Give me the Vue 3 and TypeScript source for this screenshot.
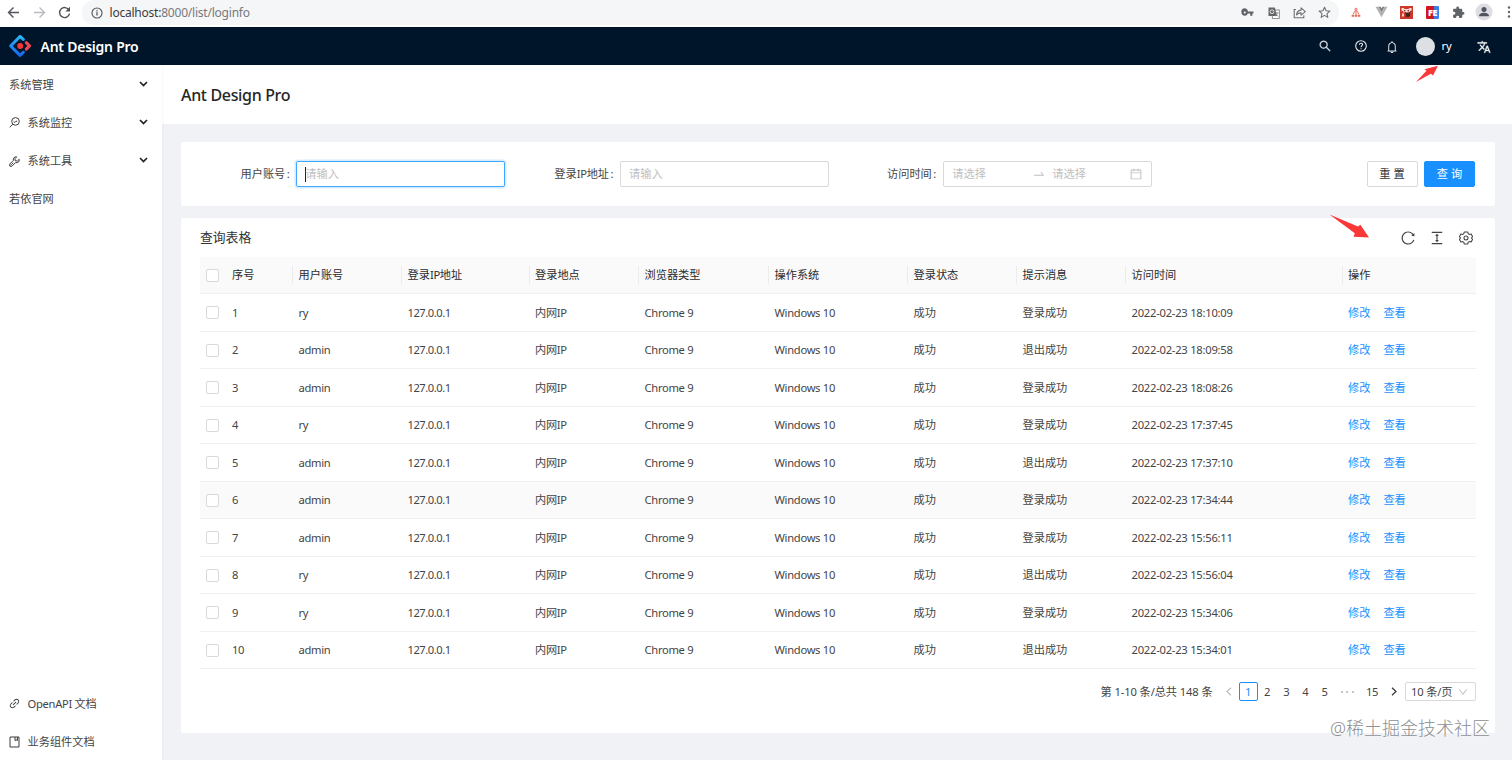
<script setup lang="ts">
interface Row { id: number; user: string; status: string; msg: string; time: string }

const rows: Row[] = [
  ['ry', '登录成功', '18:10:09'],
  ['admin', '退出成功', '18:09:58'],
  ['admin', '登录成功', '18:08:26'],
  ['ry', '登录成功', '17:37:45'],
  ['admin', '退出成功', '17:37:10'],
  ['admin', '登录成功', '17:34:44'],
  ['admin', '登录成功', '15:56:11'],
  ['ry', '退出成功', '15:56:04'],
  ['ry', '登录成功', '15:34:06'],
  ['admin', '退出成功', '15:34:01'],
].map(([user, msg, time], i) => ({ id: i + 1, user, status: '成功', msg, time: `2022-02-23 ${time}` }))

const columns: string[] = ['序号', '用户账号', '登录IP地址', '登录地点', '浏览器类型', '操作系统', '登录状态', '提示消息', '访问时间', '操作']
const pages: string[] = ['2', '3', '4', '5']

const icons = {
  search: 'M909.6 854.5L649.9 594.8C690.2 542.7 712 479 712 412c0-80.2-31.3-155.4-87.9-212.1-56.6-56.7-132-87.9-212.1-87.9s-155.5 31.3-212.1 87.9C143.2 256.5 112 331.8 112 412c0 80.1 31.3 155.5 87.9 212.1C256.5 680.8 331.8 712 412 712c67 0 130.6-21.8 182.7-62l259.7 259.6a8.2 8.2 0 0011.6 0l43.6-43.5a8.2 8.2 0 000-11.6zM570.4 570.4C528 612.7 471.8 636 412 636s-116-23.3-158.4-65.6C211.3 528 188 471.8 188 412s23.3-116.1 65.6-158.4C296 211.3 352.2 188 412 188s116.1 23.2 158.4 65.6S636 352.2 636 412s-23.3 116.1-65.6 158.4z',
  bell: 'M816 768h-24V428c0-141.1-104.3-257.8-240-277.1V112c0-22.1-17.9-40-40-40s-40 17.9-40 40v38.9c-135.7 19.3-240 136-240 277.1v340h-24c-17.7 0-32 14.3-32 32v32c0 4.4 3.6 8 8 8h216c0 61.8 50.2 112 112 112s112-50.2 112-112h216c4.4 0 8-3.6 8-8v-32c0-17.7-14.3-32-32-32zM512 888c-26.5 0-48-21.5-48-48h96c0 26.5-21.5 48-48 48zM304 768V428c0-55.6 21.6-107.8 60.9-147.1S456.4 220 512 220c55.6 0 107.8 21.6 147.1 60.9S720 372.4 720 428v340H304z',
  reload: 'M909.1 209.3l-56.4 44.1C775.8 155.1 656.2 92 521.9 92 290 92 102.3 279.5 102 511.5 101.7 743.7 289.8 932 521.9 932c181.3 0 335.8-115 394.6-276.1 1.5-4.2-.7-8.9-4.9-10.3l-56.7-19.5a8 8 0 00-10.1 4.8c-1.8 5-3.8 10-5.9 14.9-17.3 41-42.1 77.8-73.7 109.4A344.77 344.77 0 01655.9 829c-42.3 17.9-87.4 27-133.8 27-46.5 0-91.5-9.1-133.8-27A341.5 341.5 0 01279 755.2a342.16 342.16 0 01-73.7-109.4c-17.9-42.4-27-87.4-27-133.9s9.1-91.5 27-133.9c17.3-41 42.1-77.8 73.7-109.4 31.6-31.6 68.4-56.4 109.3-73.8 42.3-17.9 87.4-27 133.8-27 46.5 0 91.5 9.1 133.8 27a341.5 341.5 0 01109.3 73.8c9.9 9.9 19.2 20.4 27.8 31.4l-60.2 47a8 8 0 003 14.1l175.6 43c5 1.2 9.9-2.6 9.9-7.7l.8-180.9c-.1-6.6-7.8-10.3-13-6.2z',
  height: 'M840 836H184c-4.4 0-8 3.6-8 8v60c0 4.4 3.6 8 8 8h656c4.4 0 8-3.6 8-8v-60c0-4.4-3.6-8-8-8zm0-724H184c-4.4 0-8 3.6-8 8v60c0 4.4 3.6 8 8 8h656c4.4 0 8-3.6 8-8v-60c0-4.4-3.6-8-8-8zM610.8 378c6 0 9.4-7 5.7-11.7L515.7 238.7a7.14 7.14 0 00-11.3 0L403.6 366.3a7.23 7.23 0 005.7 11.7H476v268h-62.8c-6 0-9.4 7-5.7 11.7l100.8 127.5c2.9 3.7 8.5 3.7 11.3 0l100.8-127.5c3.7-4.7.4-11.7-5.7-11.7H548V378h62.8z',
  down: 'M884 256h-75c-5.1 0-9.9 2.5-12.9 6.6L512 654.2 227.9 262.6c-3-4.1-7.8-6.6-12.9-6.6h-75c-6.5 0-10.3 7.4-6.5 12.7l352.6 486.1c12.8 17.6 39 17.6 51.7 0l352.6-486.1c3.9-5.3.1-12.7-6.4-12.7z',
  calendar: 'M880 184H712v-64c0-4.4-3.6-8-8-8h-56c-4.4 0-8 3.6-8 8v64H384v-64c0-4.4-3.6-8-8-8h-56c-4.4 0-8 3.6-8 8v64H144c-17.7 0-32 14.3-32 32v664c0 17.7 14.3 32 32 32h736c17.7 0 32-14.3 32-32V216c0-17.7-14.3-32-32-32zm-40 656H184V460h656v380zM184 392V256h128v48c0 4.4 3.6 8 8 8h56c4.4 0 8-3.6 8-8v-48h256v48c0 4.4 3.6 8 8 8h56c4.4 0 8-3.6 8-8v-48h128v136H184z',
  swap: 'M873.1 596.2l-164-208A32 32 0 00684 376h-64.8c-6.7 0-10.4 7.7-6.3 13l144.3 183H152c-4.4 0-8 3.6-8 8v60c0 4.4 3.6 8 8 8h695.9c26.8 0 41.7-30.8 25.2-51.8z',
  link: 'M574 665.4a8.03 8.03 0 00-11.3 0L446.5 781.6c-53.8 53.8-144.6 59.5-204 0-59.5-59.5-53.8-150.2 0-204l116.2-116.2c3.1-3.1 3.1-8.2 0-11.3l-39.8-39.8a8.03 8.03 0 00-11.3 0L191.4 526.5c-84.6 84.6-84.6 221.5 0 306s221.5 84.6 306 0l116.2-116.2c3.1-3.1 3.1-8.2 0-11.3L574 665.4zm258.6-474c-84.6-84.6-221.5-84.6-306 0L410.3 307.6a8.03 8.03 0 000 11.3l39.7 39.7c3.1 3.1 8.2 3.1 11.3 0l116.2-116.2c53.8-53.8 144.6-59.5 204 0 59.5 59.5 53.8 150.2 0 204L665.3 562.6a8.03 8.03 0 000 11.3l39.8 39.8c3.1 3.1 8.2 3.1 11.3 0l116.2-116.2c84.5-84.6 84.5-221.5 0-306.1zM610.1 372.3a8.03 8.03 0 00-11.3 0L372.3 598.7a8.03 8.03 0 000 11.3l39.6 39.6c3.1 3.1 8.2 3.1 11.3 0l226.4-226.4c3.1-3.1 3.1-8.2 0-11.3l-39.5-39.6z',
  lang: 'M12.87 15.07l-2.54-2.51.03-.03A17.52 17.52 0 0014.07 6H17V4h-7V2H8v2H1v2h11.17C11.5 7.92 10.44 9.75 9 11.35 8.07 10.32 7.3 9.19 6.69 8h-2c.73 1.63 1.73 3.17 2.98 4.56l-5.09 5.02L4 19l5-5 3.11 3.11.76-2.04zM18.5 10h-2L12 22h2l1.12-3h4.75L21 22h2l-4.5-12zm-2.62 7l1.62-4.33L19.12 17h-3.24z',
  key: 'M12.65 10A6 6 0 101 12a6 6 0 0011.65 2H17v4h4v-4h2v-4H12.65zM7 14a2 2 0 110-4 2 2 0 010 4z',
  puzzle: 'M20.5 11H19V7c0-1.1-.9-2-2-2h-4V3.5a2.5 2.5 0 00-5 0V5H4c-1.1 0-2 .9-2 2v3.8h1.5a2.7 2.7 0 010 5.4H2V20c0 1.1.9 2 2 2h3.8v-1.5a2.7 2.7 0 015.4 0V22H17c1.1 0 2-.9 2-2v-4h1.5a2.5 2.5 0 000-5z',
}
</script>

<template>
  <div class="screen">
    <div class="browser">
      <div class="nav">
        <svg width="13" height="13" viewBox="0 0 13 13" class="line dark"><path d="M12 6.500H1.500M6.500 1.500l-5 5 5 5" /></svg>
        <svg width="13" height="13" viewBox="0 0 13 13" class="line pale"><path d="M1 6.500h10.500M6.500 1.500l5 5-5 5" /></svg>
        <svg width="13" height="13" viewBox="0 0 13 13" class="line dark"><path d="M11 4.200A5 5 0 1 0 11.500 7.600" /><path d="M12 .8v4.600H7.400z" fill="#505357" stroke="none" /></svg>
      </div>
      <div class="omnibox">
        <svg width="12" height="12" viewBox="0 0 12 12" class="line dark info"><circle cx="6" cy="6" r="5" stroke-width="1.100" /><path d="M6 5.300v3.200M6 3.200v1.200" stroke-width="1.300" /></svg>
        <span class="url">localhost:<span class="path">8000/list/loginfo</span></span>
        <div class="slots">
          <i><svg width="13" height="13" viewBox="0 0 24 24"><path :d="icons.key" fill="#5f6368" /></svg></i>
          <i><svg width="12" height="12" viewBox="0 0 12 12"><rect x="4.300" y="3" width="7" height="8.400" fill="#fff" stroke="#777" stroke-width=".8" /><path d="M.5.5h6.300l2.400 8.500H.5z" fill="#63666a" /><circle cx="4" cy="4.700" r="1.900" fill="none" stroke="#eee" stroke-width=".9" /><path d="M4 4.700h2M7.200 6h3.500M9 5v1c0 1.500-.8 2.500-2 3M7.800 7l2.500 2.600" stroke="#888" stroke-width=".8" fill="none" /></svg></i>
          <i><svg width="13" height="13" viewBox="0 0 13 13" class="line mid"><path d="M3 3.500H1.200v8.300h9.600V9.300" /><path d="M3.500 9c.2-3 1.800-4.700 4.600-4.900V1.800l4.200 3.800-4.200 3.600V6.900C6 6.900 4.600 7.600 3.500 9z" stroke-linejoin="round" /></svg></i>
          <i><svg width="13" height="13" viewBox="0 0 13 13" class="line mid"><path d="M6.500 1.200l1.600 3.500 3.800.4L9 7.600l.8 3.800-3.300-2-3.300 2L4 7.600 1.100 5.100l3.800-.4z" stroke-linejoin="round" /></svg></i>
        </div>
      </div>
      <div class="slots ext">
        <i><svg width="10" height="11" viewBox="0 0 11 11" fill="none" stroke="#ea6a55" stroke-width="1.100"><circle cx="5.500" cy="2" r="1.200" /><path d="M5.500 3.200v5M2.500 7.500l1.300-3.200 1.700-1 1.700 1 1.300 3.200" /><path d="M1 8.300h2.300v1.700H1zM4.400 8.300h2.200v1.700H4.400zM7.700 8.300H10v1.700H7.700z" fill="#ea6a55" stroke-width=".5" /></svg></i>
        <i><svg width="13" height="12" viewBox="0 0 13 12"><path d="M.5.700h3L6.500 6l3-5.300h3l-6 10.500z" fill="#b2b2b2" /><path d="M3.500.700h2.100l.9 1.700.9-1.700h2.100L6.500 6z" fill="#7c7c7c" /></svg></i>
        <i><svg width="13" height="13" viewBox="0 0 13 13"><rect width="13" height="13" fill="#cf3829" /><path d="M1.500 2h2l1 1h4l1-1h2v2.500l-2 1v1h-6v-1l-2-1z" fill="#f5ddd5" /><circle cx="4.700" cy="4.700" r=".8" fill="#912" /><circle cx="8.300" cy="4.700" r=".8" fill="#912" /><path d="M2 7.500h2v3H2z" fill="#f1cfc4" /><circle cx="8" cy="8.700" r="2.300" fill="#41251d" /><path d="M5 6l1.500 2M10.500 5.500L9 8M5.500 11l1-1" stroke="#41251d" /></svg></i>
        <i><span class="fe">FE</span></i>
        <i><svg width="13" height="13" viewBox="0 0 24 24"><path :d="icons.puzzle" fill="#5f6368" /></svg></i>
        <i><svg width="18" height="18" viewBox="0 0 18 18"><circle cx="9" cy="9" r="8.500" fill="#dcdee3" /><circle cx="9" cy="6.600" r="2.500" fill="#50555d" /><path d="M4.200 13.300v-1c0-1.800 3-2.600 4.800-2.600s4.800.8 4.800 2.600v1z" fill="#50555d" /></svg></i>
        <i><svg width="4" height="14" viewBox="0 0 4 14" fill="#5f6368"><circle cx="2" cy="2.500" r="1.200" /><circle cx="2" cy="7" r="1.200" /><circle cx="2" cy="11.500" r="1.200" /></svg></i>
      </div>
    </div>

    <header class="topbar">
      <svg class="logo" width="24" height="24" viewBox="0 0 24 24" fill="none" stroke-width="3.100" stroke-linecap="round" stroke-linejoin="round">
        <defs><linearGradient id="blue" x1="0" y1="0" x2="0" y2="1"><stop offset="0" stop-color="#2bb4f5" /><stop offset="1" stop-color="#1769f0" /></linearGradient></defs>
        <path d="M15.300 5.400L12 2.500 2.700 12l9.300 9.300 3.300-3" stroke="url(#blue)" />
        <path d="M18.300 8.600l3.200 3.300-3.200 3.300" stroke="#ed4453" />
        <circle cx="12.200" cy="12" r="3" fill="#f5363f" />
      </svg>
      <span class="brand">Ant Design Pro</span>
      <div class="tools">
        <svg class="t-search" width="12" height="12" viewBox="64 64 896 896"><path :d="icons.search" fill="#dfe3e8" stroke="#dfe3e8" stroke-width="20" /></svg>
        <svg class="t-help" width="12" height="12" viewBox="0 0 12 12" fill="none" stroke="#e4e7eb"><circle cx="6" cy="6" r="5.300" stroke-width="1.100" /><path d="M4.400 4.700c0-2 3.200-2 3.200-.1C7.600 5.800 6 5.700 6 7.200M6 8.200v1" stroke-width="1.050" /></svg>
        <svg class="t-bell" width="12" height="12" viewBox="64 64 896 896"><path :d="icons.bell" fill="#e4e7eb" /></svg>
        <span class="avatar"></span>
        <span class="user">ry</span>
        <svg class="t-lang" width="14" height="14" viewBox="0 0 24 24"><path :d="icons.lang" fill="#f0f2f4" stroke="#f0f2f4" stroke-width=".5" /></svg>
      </div>
    </header>

    <div class="body">
      <aside class="side">
        <div class="item"><span>系统管理</span><svg class="chev" width="9" height="6" viewBox="0 0 9 6"><path d="M1 1l3.500 3.500L8 1" /></svg></div>
        <div class="item">
          <svg class="ic" width="11" height="11" viewBox="0 0 11 11"><circle cx="6.500" cy="4.400" r="3.800" /><path d="M3.800 7.100L.7 10.300M4.600 4.300l1.300 1.200L7 4.200l1.200.1" /></svg>
          <span>系统监控</span><svg class="chev" width="9" height="6" viewBox="0 0 9 6"><path d="M1 1l3.500 3.500L8 1" /></svg>
        </div>
        <div class="item">
          <svg class="ic" width="11" height="11" viewBox="0 0 11 11"><path d="M7.700.9c-2-.6-4 1.200-3.300 3.500L.8 8v2.200H3l3.600-3.600c2.300.7 4.200-1.200 3.600-3.300L8.400 5 6.200 4.800 6 2.600zM2.300 8.700l2-2" stroke-linejoin="round" /></svg>
          <span>系统工具</span><svg class="chev" width="9" height="6" viewBox="0 0 9 6"><path d="M1 1l3.500 3.500L8 1" /></svg>
        </div>
        <div class="item"><span>若依官网</span></div>
        <div class="spacer"></div>
        <div class="item"><svg class="ic" width="11" height="11" viewBox="64 64 896 896"><path :d="icons.link" class="solid" /></svg><span class="mixed">OpenAPI 文档</span></div>
        <div class="item last"><svg class="ic" width="11" height="12" viewBox="0 0 11 12"><path d="M1 1h9v10H1zM6 1v3.600l1.200-.8 1.200.8V1" /></svg><span>业务组件文档</span></div>
      </aside>

      <main>
        <div class="page-head">Ant Design Pro</div>
        <section class="card form">
          <label class="l1">用户账号<b>:</b></label>
          <div class="input focus"><span class="caret"></span>请输入</div>
          <label class="l2">登录<span class="mixed">IP</span>地址<b>:</b></label>
          <div class="input">请输入</div>
          <label class="l3">访问时间<b>:</b></label>
          <div class="input range">
            <span class="start">请选择</span>
            <svg class="swap" width="12" height="12" viewBox="64 64 896 896"><path :d="icons.swap" /></svg>
            <span class="end">请选择</span>
            <svg width="12" height="12" viewBox="64 64 896 896"><path :d="icons.calendar" /></svg>
          </div>
          <div class="buttons"><button>重 置</button><button class="primary">查 询</button></div>
        </section>

        <section class="card list">
          <div class="list-head">
            <span class="title">查询表格</span>
            <svg width="14" height="14" viewBox="64 64 896 896"><path :d="icons.reload" /></svg>
            <svg width="14" height="14" viewBox="64 64 896 896"><path :d="icons.height" /></svg>
            <svg width="14" height="14" viewBox="0 0 14 14" class="gear"><path d="M5.300 1h3.400l.5 1.700 1.100.7 1.800-.5 1.500 2.800-1.200 1.300 1.200 1.300-1.500 2.800-1.800-.5-1.100.7-.5 1.700H5.300l-.5-1.700-1.100-.7-1.800.5L.4 8.300 1.600 7 .4 5.700l1.500-2.800 1.800.5 1.100-.7z" /><circle cx="7" cy="7" r="2" /></svg>
          </div>
          <div class="grid thead">
            <div class="check"><span></span></div>
            <div v-for="c in columns" :key="c" class="cell"><template v-if="c === '登录IP地址'">登录<span class="mixed">IP</span>地址</template><template v-else>{{ c }}</template></div>
          </div>
          <div v-for="r in rows" :key="r.id" class="grid row" :class="{ hover: r.id === 6 }">
            <div class="check"><span></span></div>
            <div class="cell">{{ r.id }}</div>
            <div class="cell">{{ r.user }}</div>
            <div class="cell ip">127.0.0.1</div>
            <div class="cell">内网IP</div>
            <div class="cell">Chrome 9</div>
            <div class="cell">Windows 10</div>
            <div class="cell cn">{{ r.status }}</div>
            <div class="cell cn">{{ r.msg }}</div>
            <div class="cell time">{{ r.time }}</div>
            <div class="cell cn links"><a>修改</a><a>查看</a></div>
          </div>
          <div class="pager">
            <span class="total">第 1-10 条/总共 148 条</span>
            <span class="arrow off"><svg width="6" height="9" viewBox="0 0 6 9"><path d="M5 .8L1 4.500l4 3.700" /></svg></span>
            <span class="page current">1</span>
            <span v-for="p in pages" :key="p" class="page">{{ p }}</span>
            <span class="page dots"><em></em><em></em><em></em></span>
            <span class="page wide">15</span>
            <span class="arrow"><svg width="6" height="9" viewBox="0 0 6 9"><path d="M1 .8l4 3.700-4 3.700" /></svg></span>
            <span class="size">10 条/页<svg width="10" height="10" viewBox="64 64 896 896"><path :d="icons.down" /></svg></span>
          </div>
        </section>
      </main>
    </div>

    <svg class="mark mark-a" width="24" height="18" viewBox="0 0 24 18"><path d="M1 17L11.500 5.800 9.500 4.200 23 .8 18 10.500l-2.200-1.800z" /></svg>
    <svg class="mark mark-b" width="41" height="25" viewBox="0 0 41 25"><path d="M.5.500L29 12.500l2.400-1.700L40 23.500l-15.500-.8 1.300-3.400z" /></svg>
    <div class="watermark">@稀土掘金技术社区</div>
  </div>
</template>

<style>
body { margin: 0; overflow: hidden; }
</style>

<style scoped>
.screen { position: relative; width: 1512px; height: 760px; overflow: hidden; display: flex; flex-direction: column; background: #f0f2f5; color: #444; font: 11.2px/18px "Noto Sans", "Noto Sans CJK SC", sans-serif; box-sizing: border-box; }
.screen * { box-sizing: border-box; }
svg { display: block; flex: none; }
.line { fill: none; stroke-width: 1.4; }
.dark { stroke: #505357; }
.pale { stroke: #b9bbbe; }
.mid { stroke: #6c6f73; stroke-width: 1.1; }
.browser { height: 27px; flex: none; display: flex; background: #fff; padding-bottom: 2px; overflow: hidden; }
.nav { width: 82px; flex: none; display: flex; align-items: center; gap: 12.500px; padding-left: 7px; }
.omnibox { width: 1257px; flex: none; display: flex; align-items: center; background: #f5f6f7; border-radius: 12px; padding-left: 9px; }
.info { margin-right: 6.500px; }
.url { font-size: 12px; letter-spacing: -.22px; color: #3a3b3d; white-space: nowrap; }
.path { color: #77797c; }
.slots { display: flex; flex: none; margin-left: auto; padding-right: 1.500px; }
.slots i { width: 25.600px; height: 24px; display: flex; flex: none; align-items: center; justify-content: center; font-style: normal; }
.ext { margin: 0 0 0 4px; padding: 0; }
.fe { width: 13px; height: 13px; border-radius: 1px; background: linear-gradient(90deg, #d2161f 58%, #3e7ee8 58%); color: #fff; font: 800 9px/13px "Open Sans", sans-serif; letter-spacing: -.2px; text-align: center; }
.topbar { height: 38.400px; flex: none; display: flex; align-items: center; background: #001529; color: #fff; padding-left: 8px; }
.brand { margin: 1px 0 0 8.500px; font-size: 14px; font-weight: 600; letter-spacing: -.24px; white-space: nowrap; }
.tools { margin-left: auto; display: flex; align-items: center; padding-right: 21px; }
.t-help { margin-left: 24.500px; }
.t-bell { margin: 2px 0 0 18.500px; }
.avatar { width: 19px; height: 19px; border-radius: 50%; background: #dcdfe3; margin-left: 18.500px; }
.user { margin-left: 6.500px; width: 35.500px; }
.t-lang { margin-top: 2px; }
.body { flex: 1; display: flex; min-height: 0; }
.side { width: 162px; flex: none; background: #fff; display: flex; flex-direction: column; box-shadow: 1px 0 2px rgba(0, 21, 41, .04); z-index: 1; }
.item { height: 38.300px; flex: none; display: flex; align-items: center; padding: 0 14px 0 9px; white-space: nowrap; }
.last { margin-bottom: -1.400px; }
.ic { margin-right: 7.500px; fill: none; stroke: #3c3c3c; stroke-width: 1; }
.solid { fill: #3c3c3c; stroke: none; }
.chev { margin: -2px 0 0 auto; fill: none; stroke: #222; stroke-width: 1.700; }
.spacer { flex: 1; }
.mixed { letter-spacing: -.3px; }
main { flex: 1; min-width: 0; display: flex; flex-direction: column; }
.page-head { height: 58.500px; flex: none; background: #fff; padding: 1px 0 0 19px; line-height: 59px; font-size: 16px; font-weight: 500; letter-spacing: -.34px; color: #262626; }
.card { background: #fff; border-radius: 2px; margin: 0 17px 0 19px; flex: none; }
.form { height: 64.500px; margin-top: 18px; display: flex; align-items: center; }
label { margin-right: 5px; white-space: nowrap; display: flex; }
label b { font-weight: 400; width: 6px; text-align: center; }
.l1 { margin-left: 59.500px; }
.l2 { margin-left: 49.500px; }
.l3 { margin-left: 58.500px; }
.input { width: 209px; height: 26px; border: 1px solid #d9d9d9; border-radius: 2px; padding: 0 8.500px; display: flex; align-items: center; color: #bfbfbf; }
.l1, .l2 { margin-right: 4.500px; }
.focus { border-color: #40a9ff; box-shadow: 0 0 0 1.500px rgba(24, 144, 255, .18); }
.caret { width: 1px; height: 15px; background: #222; margin-right: -1px; }
.range svg { fill: #bfbfbf; }
.range .start { width: 81px; }
.range .swap { margin-right: 7px; }
.range .end { width: 78px; }
.buttons { margin: 0 20px 0 auto; display: flex; gap: 6.500px; }
button { width: 51px; height: 26px; padding: 0; border: 1px solid #d9d9d9; border-radius: 2px; background: #fff; color: #333; font: inherit; }
button.primary { background: #1890ff; border-color: #1890ff; color: #fff; }
.list { height: 515px; margin-top: 12px; padding: 0 19px; }
.list-head { height: 38.400px; display: flex; align-items: center; gap: 14.700px; padding: 0 3.500px 0 0; fill: #444; }
.title { font-size: 12.800px; margin: -1px auto 0 0; color: #333; }
.gear { fill: none; stroke: #444; stroke-width: 1.050; stroke-linejoin: round; }
.grid { display: grid; grid-template-columns: 25.500px 66.500px 109px 127.500px 109.500px 130px 139px 109px 109px 216.500px 1fr; height: 37.500px; align-items: center; border-bottom: 1px solid #f0f0f0; }
.thead { background: #fafafa; color: #2b2b2b; }
.cell { padding-left: 6.500px; white-space: nowrap; }
.row .cell { letter-spacing: -.3px; }
.row .ip { letter-spacing: -.48px; }
.row .time { letter-spacing: -.24px; }
.row .cn { letter-spacing: 0; }
.thead .cell + .cell { box-shadow: inset 1px 0 #ececec; }
.hover { background: #fafafa; }
.check { padding-left: 6px; }
.check span { display: block; width: 13px; height: 13px; border: 1px solid #d9d9d9; border-radius: 2px; background: #fff; }
.row .links { display: flex; gap: 13px; color: #1890ff; }
.pager { display: flex; justify-content: flex-end; align-items: center; height: 19.500px; margin: 12.500px .5px 0 0; white-space: nowrap; }
.total { margin-right: 7px; letter-spacing: -.1px; }
.arrow { width: 19px; display: flex; justify-content: center; }
.arrow svg { fill: none; stroke: #333; stroke-width: 1.200; }
.off svg { stroke: #bfbfbf; }
.page { width: 19.100px; height: 19.100px; text-align: center; line-height: 19px; letter-spacing: -.3px; }
.page.current { border: 1px solid #1890ff; border-radius: 2px; color: #1890ff; line-height: 17px; }
.dots { width: 26px; display: flex; gap: 3.500px; align-items: center; justify-content: center; }
.dots em { width: 2px; height: 2px; border-radius: 50%; background: #b5b5b5; }
.wide { width: 24px; }
.size { width: 71px; height: 19px; border: 1px solid #d9d9d9; border-radius: 2px; padding: 0 7px 0 5.500px; line-height: 17px; display: flex; align-items: center; justify-content: space-between; margin-left: 1.500px; letter-spacing: -.15px; }
.size svg { fill: #bfbfbf; }
.mark { position: absolute; fill: #fb3838; }
.mark-a { left: 1415px; top: 65px; }
.mark-b { left: 1329px; top: 214px; }
.watermark { position: absolute; left: 1330px; top: 714px; font-size: 18px; line-height: 28px; color: #8d8f92; text-shadow: 0 0 2px #fff; white-space: nowrap; font-weight: 300; }
</style>
